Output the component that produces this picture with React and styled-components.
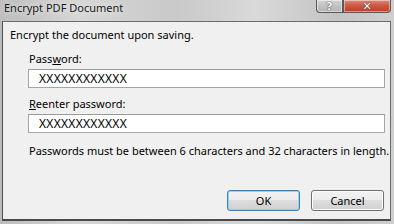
import React from "react";
import styled, { createGlobalStyle } from "styled-components";

const Global = createGlobalStyle`
  html, body { margin: 0; padding: 0; }
  body { width: 394px; height: 224px; overflow: hidden; }
`;

const FONT = `"Noto Sans", "Open Sans", sans-serif`;

const Window = styled.div`
  width: 394px;
  height: 224px;
  box-sizing: border-box;
  display: flex;
  flex-direction: column;
  background: linear-gradient(90deg, #bdbdbd 0%, #d6d6d6 20%, #c9c9c9 45%, #d9d9d9 65%, #c4c4c4 85%, #cfcfcf 100%);
  font-family: ${FONT};
  font-size: 11px;
  color: #000;
  padding: 0 3px 3px 2px;
`;

const TitleBar = styled.div`
  height: 21px;
  display: flex;
  align-items: flex-start;
  justify-content: space-between;
`;

const Title = styled.div`
  font-size: 11px;
  line-height: 16px;
  padding: 0 0 0 2px;
  color: #1a1a1a;
  text-shadow: 0 0 6px rgba(255,255,255,0.9);
`;

const Caption = styled.div`
  display: flex;
  height: 13px;
`;

const CapButton = styled.div`
  box-sizing: border-box;
  height: 13px;
  width: ${(p) => p.$w}px;
  display: flex;
  align-items: center;
  justify-content: center;
  border: 1px solid #5a5a5a;
  border-top: none;
  background: ${(p) =>
    p.$close
      ? "linear-gradient(180deg, #d98c7a 0%, #cf5a45 45%, #c13a22 100%)"
      : "linear-gradient(180deg, #d4d4d4 0%, #c2c2c2 50%, #b5b5b5 100%)"};
  border-radius: ${(p) => (p.$close ? "0 0 4px 0" : "0 0 0 4px")};
  box-shadow: inset 0 0 0 1px rgba(255,255,255,0.45);
  color: #fff;
  font-family: "DejaVu Sans", sans-serif;
  font-weight: bold;
  font-size: 11px;
  line-height: 11px;
  text-shadow: 0 0 1px #333, 0 0 1px #333;
`;

const Panel = styled.div`
  flex: 1;
  display: flex;
  flex-direction: column;
  background: #f0f0f0;
  border: 1px solid #6b6b6b;
  border-left-color: #4f4f4f;
  border-bottom: 2px solid #4a4a4a;
  padding: 0 5px 0 7px;
`;

const Heading = styled.div`
  line-height: 16px;
  margin-top: 5px;
`;

const Field = styled.div`
  display: flex;
  flex-direction: column;
  padding-left: 18px;
  margin-top: ${(p) => p.$top}px;
`;

const Label = styled.label`
  line-height: 16px;
  padding-left: 1px;
`;

const Input = styled.div`
  box-sizing: border-box;
  height: 19px;
  margin-top: 2px;
  background: #fff;
  border: 1px solid #a5a5a5;
  border-top-color: #9a9a9a;
  padding-left: 10px;
  font-size: 12px;
  line-height: 17px;
  letter-spacing: 0.3px;
`;

const Note = styled.div`
  line-height: 16px;
  padding-left: 19px;
  margin-top: 10px;
  white-space: nowrap;
`;

const Buttons = styled.div`
  margin-top: auto;
  display: flex;
  justify-content: flex-end;
  gap: 11px;
  padding-bottom: 8px;
  padding-right: 1px;
`;

const Button = styled.button`
  box-sizing: border-box;
  width: 73px;
  height: 21px;
  padding: 0;
  font-family: ${FONT};
  font-size: 11px;
  color: #000;
  border-radius: 3px;
  border: 1px solid ${(p) => (p.$default ? "#3c7fb1" : "#707070")};
  background: linear-gradient(180deg, #f2f2f2 0%, #ebebeb 49%, #dddddd 50%, #cfcfcf 100%);
  box-shadow: inset 0 0 0 1px ${(p) => (p.$default ? "#8fd3f5" : "#fcfcfc")};
`;

export default function App() {
  return (
    <>
      <Global />
      <Window>
        <TitleBar>
          <Title>Encrypt PDF Document</Title>
          <Caption>
            <CapButton $w={27}>?</CapButton>
            <CapButton $w={48} $close>✕</CapButton>
          </Caption>
        </TitleBar>
        <Panel>
          <Heading>Encrypt the document upon saving.</Heading>
          <Field $top={8}>
            <Label>Pass<u>w</u>ord:</Label>
            <Input>XXXXXXXXXXXX</Input>
          </Field>
          <Field $top={8}>
            <Label><u>R</u>eenter password:</Label>
            <Input>XXXXXXXXXXXX</Input>
          </Field>
          <Note>Passwords must be between 6 characters and 32 characters in length.</Note>
          <Buttons>
            <Button $default>OK</Button>
            <Button>Cancel</Button>
          </Buttons>
        </Panel>
      </Window>
    </>
  );
}
